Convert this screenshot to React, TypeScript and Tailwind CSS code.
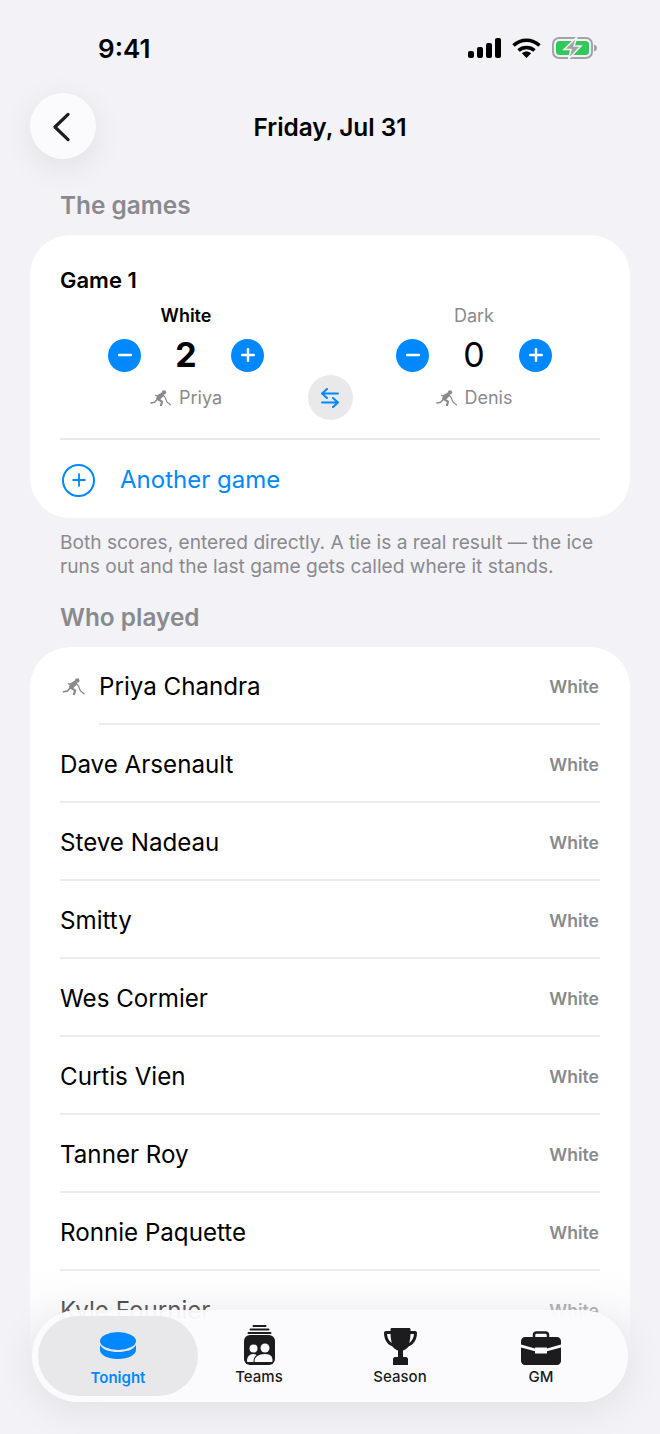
import { Minus, Plus } from "lucide-react";

const players = [
  "Dave Arsenault",
  "Steve Nadeau",
  "Smitty",
  "Wes Cormier",
  "Curtis Vien",
  "Tanner Roy",
  "Ronnie Paquette",
  "Kyle Fournier",
  "",
];

const Skater = ({ className }: { className: string }) => (
  <svg viewBox="0 0 63 48" className={className} fill="none" stroke="#8a8a8e" strokeLinecap="round" strokeLinejoin="round">
    <circle cx="42" cy="7" r="6.500" fill="#8a8a8e" stroke="none" />
    <path d="M35 15L25 25" strokeWidth="13" />
    <path d="M22 28l-8 9-11 2" strokeWidth="4.500" />
    <path d="M28 30l8 5-3 11" strokeWidth="6.500" />
    <path d="M30 13l-9 5-4-2" strokeWidth="4" />
    <path d="M39 15l6 7 6 14 11 9" strokeWidth="3.500" />
  </svg>
);

const Stepper = ({ value, bold }: { value: number; bold?: boolean }) => (
  <div className="flex items-center justify-center">
    <button className="flex size-[33px] items-center justify-center rounded-full bg-[#0088ff] text-white">
      <Minus size={20} strokeWidth={3} />
    </button>
    <span className={`w-[90px] text-center text-[34px] leading-[40px] text-black ${bold ? "font-bold" : "font-normal"}`}>
      {value}
    </span>
    <button className="flex size-[33px] items-center justify-center rounded-full bg-[#0088ff] text-white">
      <Plus size={20} strokeWidth={3} />
    </button>
  </div>
);

const TeamColumn = ({ team, score, goalie, active }: { team: string; score: number; goalie: string; active?: boolean }) => (
  <div className="flex flex-col items-center">
    <div className={`text-[18px] leading-[24px] ${active ? "font-semibold text-black" : "text-[#8a8a8e]"}`}>{team}</div>
    <div className="mt-[7px]">
      <Stepper value={score} bold={active} />
    </div>
    <div className="mt-[11px] flex items-center gap-[8px] text-[18px] leading-[24px] text-[#8a8a8e]">
      <Skater className="h-[16px] w-[21px]" />
      {goalie}
    </div>
  </div>
);

const RowText = ({ name }: { name: string }) => (
  <>
    <span className="pt-[5px] text-[24.150px] text-black">{name}</span>
    <span className="pr-[1px] pt-[4px] text-[17.600px] font-semibold text-[#8a8a8e]">White</span>
  </>
);

const StatusIcons = () => (
  <div className="flex items-center gap-[11px]">
    <svg viewBox="0 0 33 20" className="h-[20px] w-[33px]" fill="#000">
      <rect x="0" y="13" width="6" height="7" rx="2" />
      <rect x="9" y="9" width="6" height="11" rx="2" />
      <rect x="18" y="5" width="6" height="15" rx="2" />
      <rect x="27" y="0" width="6" height="20" rx="2" />
    </svg>
    <svg viewBox="0 0 29 20" className="h-[20px] w-[29px]" fill="none" stroke="#000" strokeWidth="3.6">
      <path d="M1.500 7.500c7.500-7 18.500-7 26 0" />
      <path d="M6.500 12.500c4.500-4 11.500-4 16 0" />
      <path d="M14.500 20l-4.600-4.800c2.600-2.200 6.600-2.200 9.200 0z" fill="#000" stroke="none" />
    </svg>
    <svg viewBox="0 0 45 22" className="h-[22px] w-[45px]">
      <rect x="1" y="1" width="39" height="20" rx="6" fill="none" stroke="#a3a3a8" strokeWidth="2" />
      <rect x="4" y="4" width="33" height="14" rx="3.500" fill="#34c759" />
      <path d="M42 7.500c2 .5 3 2 3 3.500s-1 3-3 3.500z" fill="#a3a3a8" />
      <path d="M25 0L12 12.500h7L16.500 22 29 9h-7z" fill="#a3a3a8" stroke="#f2f2f7" strokeWidth="1.500" />
    </svg>
  </div>
);

const TonightIcon = () => (
  <svg viewBox="0 0 36 27" className="h-[27px] w-[36px]" fill="#0088ff">
    <ellipse cx="18" cy="9" rx="18" ry="9" />
    <path d="M0 13c3 5 10 7 18 7s15-2 18-7v5c0 5-8 9-18 9S0 23 0 18z" />
  </svg>
);

const TeamsIcon = () => (
  <svg viewBox="0 0 31 40" className="h-[40px] w-[31px]" fill="#1c1c1e">
    <rect x="8.500" y="0" width="14" height="2" rx="1" />
    <rect x="5.500" y="3.500" width="20" height="2" rx="1" />
    <rect x="3.500" y="7" width="24" height="2" rx="1" />
    <rect x="0" y="10" width="31" height="30" rx="6" />
    <g fill="#fbfbfe">
      <circle cx="9.500" cy="23.500" r="4" />
      <circle cx="21" cy="23" r="4.500" />
      <path d="M3 36c0-4 2.500-7 6-7 1.500 0 2.500.4 3.500 1-2 1.500-3 3.500-3 6.500 0 .3 0 .5 0 .5H4c-.6 0-1-.4-1-1z" />
      <path d="M11.500 37c-.6 0-1-.4-1-1 0-4 4-7 10.500-7s7.500 3 7.500 7c0 .6-.4 1-1 1z" />
    </g>
  </svg>
);

const TrophyIcon = () => (
  <svg viewBox="0 0 33 37" className="h-[37px] w-[33px]" fill="#1c1c1e">
    <path d="M8 0h17c1 0 1.500.5 1.500 1.500V3H31c1.200 0 2 .8 2 2 0 6-3 11.500-8.500 13.500-1.500 2-3.500 3.500-5.500 4V29h3c1 0 2 1 2 2v6H9v-6c0-1 1-2 2-2h3v-6.500c-2-.5-4-2-5.500-4C3 16.500 0 11 0 5c0-1.200.8-2 2-2h4.500V1.500C6.500.5 7 0 8 0zM3 6c.3 3.800 2 7 4.700 9C7 12 6.600 9 6.500 6zM26.500 6c-.1 3-.5 6-1.200 9 2.700-2 4.400-5.200 4.700-9z" fillRule="evenodd" />
  </svg>
);

const BriefcaseIcon = () => (
  <svg viewBox="0 0 40 34" className="h-[34px] w-[40px]">
    <path d="M13 7V4c0-1.500 1-2.500 2.500-2.500h9C26 1.500 27 2.500 27 4v3" fill="none" stroke="#1c1c1e" strokeWidth="2.500" />
    <path d="M4 6h32c2.200 0 4 1.800 4 4v3.500L26 17.500v-1h-12v1L0 13.500V10c0-2.200 1.800-4 4-4z" fill="#1c1c1e" />
    <path d="M0 16.500l14 3.800v2.200h12v-2.200l14-3.800V30c0 2.200-1.800 4-4 4H4c-2.200 0-4-1.800-4-4z" fill="#1c1c1e" />
  </svg>
);

const Tab = ({ label, icon }: { label: string; icon: React.ReactNode }) => (
  <div className="flex w-[120px] flex-col items-center">
    <div className="flex h-[40px] items-end">{icon}</div>
    <span className="mt-[2px] text-[15px] font-medium leading-[20px] text-[#1c1c1e]">{label}</span>
  </div>
);

export default function App() {
  return (
    <div className="relative h-[1434px] w-[660px] overflow-hidden bg-[#f2f2f7] font-['Inter',sans-serif]">
      <div className="flex h-[93px] items-start justify-between pl-[98px] pr-[63px] pt-[32px]">
        <span className="text-[26px] font-semibold leading-[34px] text-black">9:41</span>
        <div className="pt-[5px]">
          <StatusIcons />
        </div>
      </div>

      <div className="relative flex h-[66px] items-center justify-center pt-[3px]">
        <button className="absolute left-[30px] top-0 flex size-[66px] items-center justify-center rounded-full bg-[#fbfbfe] shadow-[0_8px_32px_rgba(0,0,0,0.08)]">
          <svg viewBox="0 0 20 32" className="mr-[3px] mt-[2px] h-[30px] w-[19px]" fill="none" stroke="#1c1c1e" strokeWidth="3.4" strokeLinecap="round" strokeLinejoin="round">
            <path d="M17 2.500L3 16l14 13.500" />
          </svg>
        </button>
        <h1 className="text-[24.400px] font-semibold text-black">Friday, Jul 31</h1>
      </div>

      <div className="px-[30px]">
        <h2 className="mt-[30px] pl-[30px] text-[24.400px] font-semibold leading-[32px] text-[#8a8a8e]">The games</h2>
        <div className="mt-[14px] rounded-[40px] bg-white px-[30px]">
          <div className="pt-[31px] text-[22px] font-semibold leading-[28px] text-black">Game 1</div>
          <div className="mt-[10px] border-b-2 border-[#e8e8eb] pb-[28px]">
            <div className="grid grid-cols-[252px_36px_252px]">
              <TeamColumn team="White" score={2} goalie="Priya" active />
              <div className="flex items-end justify-center">
                <button className="mb-[-10px] flex size-[45px] shrink-0 items-center justify-center rounded-full bg-[#e9e9ec]">
                  <svg viewBox="0 0 20 20" className="size-[20px]" fill="none" stroke="#0088ff" strokeWidth="2" strokeLinecap="round" strokeLinejoin="round">
                    <path d="M18 5.500H2M7 1L2 5.500 7 10" />
                    <path d="M2 14.500h16M13 10l5 4.500-5 4.500" />
                  </svg>
                </button>
              </div>
              <TeamColumn team="Dark" score={0} goalie="Denis" />
            </div>
          </div>
          <div className="flex h-[78px] items-center pt-[2px]">
            <div className="ml-[2px] flex size-[33px] items-center justify-center rounded-full border-[2.500px] border-[#0088ff] text-[#0088ff]">
              <Plus size={20} strokeWidth={2.2} />
            </div>
            <span className="ml-[25px] text-[24px] text-[#0088ff]">Another game</span>
          </div>
        </div>

        <p className="mt-[12px] pl-[30px] text-[19.150px] leading-[24px] text-[#8a8a8e]">
          Both scores, entered directly. A tie is a real result — the ice runs out and the last game gets called where it stands.
        </p>

        <h2 className="mt-[23px] pl-[30px] text-[24.400px] font-semibold leading-[32px] text-[#8a8a8e]">Who played</h2>
        <div className="mt-[14px] rounded-t-[40px] bg-white px-[30px]">
          <div className="flex h-[78px] items-center">
            <Skater className="ml-[2px] h-[17px] w-[23px] shrink-0" />
            <div className="ml-[14px] flex h-full flex-1 items-center justify-between border-b-2 border-[#ececef]">
              <RowText name="Priya Chandra" />
            </div>
          </div>
          {players.map((name) => (
            <div key={name} className="flex h-[78px] items-center justify-between border-b-2 border-[#ececef]">
              <RowText name={name} />
            </div>
          ))}
        </div>
      </div>

      <div className="absolute inset-x-0 bottom-0 h-[164px] bg-gradient-to-b from-[#f2f2f7]/0 to-[#f2f2f7] to-60%" />

      <div className="absolute left-[32px] top-[1310px] flex h-[92px] w-[596px] items-center rounded-[46px] bg-[#fbfbfe]/95 pl-[6px] shadow-[0_8px_40px_rgba(0,0,0,0.08)]">
        <div className="flex h-[80px] w-[160px] flex-col items-center rounded-[40px] bg-[#e8e8eb] pt-[16px]">
          <TonightIcon />
          <span className="mt-[9px] text-[15px] font-semibold leading-[20px] text-[#0088ff]">Tonight</span>
        </div>
        <div className="ml-px flex gap-[21px]">
          <Tab label="Teams" icon={<TeamsIcon />} />
          <Tab label="Season" icon={<TrophyIcon />} />
          <Tab label="GM" icon={<BriefcaseIcon />} />
        </div>
      </div>
    </div>
  );
}
